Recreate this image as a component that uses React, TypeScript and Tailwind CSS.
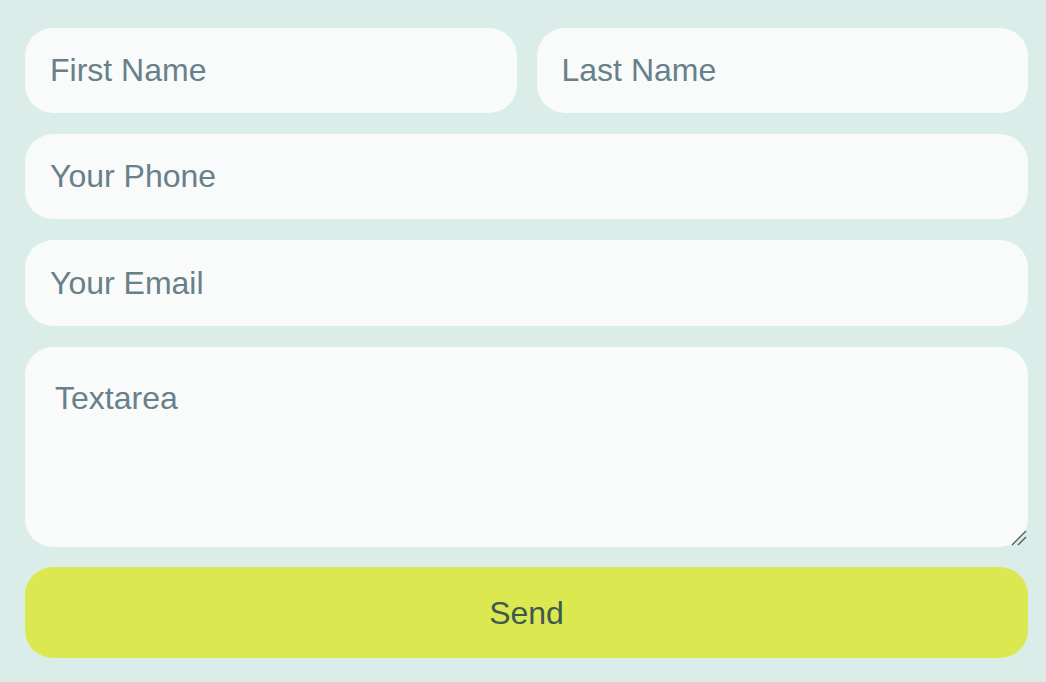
export default function App() {
  const field =
    "h-[85px] w-full rounded-[28px] bg-[#f9fafa] px-[25px] text-[32px] text-[#5f7882] placeholder:text-[#67808a] outline-none";

  return (
    <div
      className="min-h-screen w-full bg-[#daede9] pl-[25px] pr-[18px] pt-[28px] pb-[24px]"
      style={{ fontFamily: '"Liberation Sans", Arial, sans-serif' }}
    >
      <form className="flex flex-col gap-[21px]" onSubmit={(e) => e.preventDefault()}>
        <div className="grid grid-cols-2 gap-[20px]">
          <input className={field} placeholder="First Name" />
          <input className={field} placeholder="Last Name" />
        </div>
        <input className={field} placeholder="Your Phone" />
        <input className={`${field} h-[86px]`} placeholder="Your Email" />
        <div className="relative">
          <textarea
            className="block h-[200px] w-full resize-none rounded-[28px] bg-[#f9fafa] px-[30px] pt-[27px] text-[32px] text-[#5f7882] placeholder:text-[#67808a] outline-none"
            placeholder="Textarea"
          />
          {/* resize grip */}
          <svg
            className="pointer-events-none absolute bottom-[1px] right-[1px]"
            width="16"
            height="16"
            viewBox="0 0 16 16"
          >
            <path d="M1 15 L15 1 M7 15 L15 7" stroke="#5a5a5a" strokeWidth="1.4" />
          </svg>
        </div>
        <button
          type="submit"
          className="-mt-px h-[91px] w-full rounded-[28px] bg-[#dce84f] text-[32px] text-[#3d5a52]"
        >
          Send
        </button>
      </form>
    </div>
  );
}
